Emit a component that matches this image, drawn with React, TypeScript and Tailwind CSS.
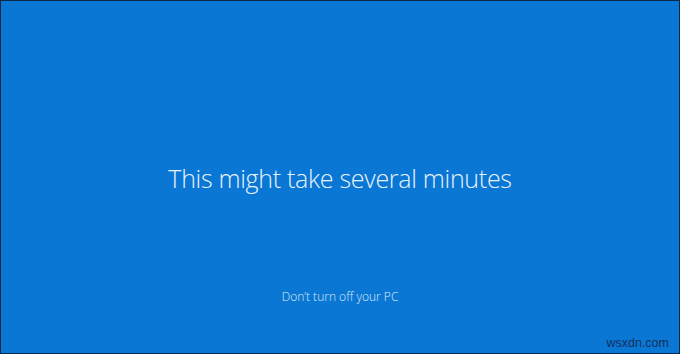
import React from 'react';

const App: React.FC = () => {
  return (
    <div className="w-[680px] h-[354px] border border-[#0b2a4a] bg-[#0a77d5] flex flex-col items-center relative" style={{ fontFamily: '"Open Sans", "Noto Sans", sans-serif' }}>
      <div className="flex-1 flex flex-col items-center">
        <h1 className="mt-[160px] text-[25px] leading-[34px] font-light text-[#e8f2fb] tracking-[-0.3px]">
          This might take several minutes
        </h1>
        <p className="mt-[94px] text-[12px] leading-[16px] font-light text-[#dce9f7]">
          Don&rsquo;t turn off your PC
        </p>
      </div>
      <span className="absolute right-[10px] bottom-[3px] text-[12.5px] leading-[14px] text-[#14305a]" style={{ fontFamily: '"Liberation Sans", Arial, sans-serif' }}>
        wsxdn.com
      </span>
    </div>
  );
};

export default App;
